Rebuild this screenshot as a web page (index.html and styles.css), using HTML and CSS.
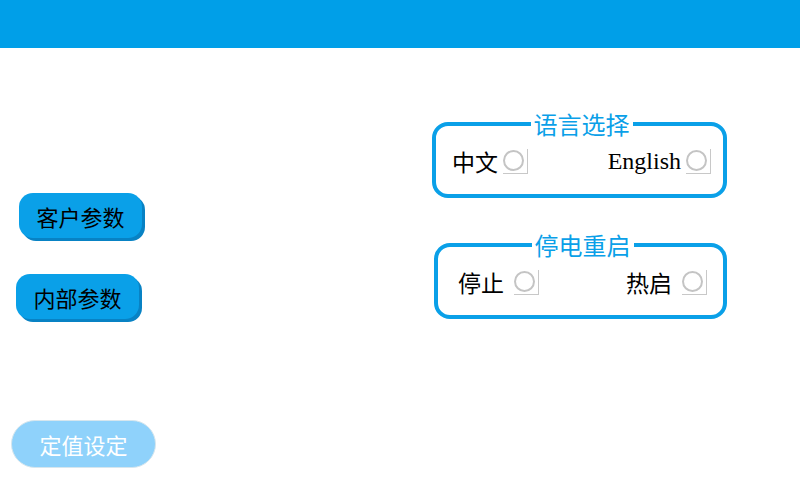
FILE: index.html
```html
<!DOCTYPE html>
<html lang="zh-CN">
<head>
    <meta charset="UTF-8">
    <meta name="viewport" content="width=device-width, initial-scale=1.0">
    <title>参数设置</title>
    <link rel="stylesheet" href="styles.css">
</head>
<body>

    <header class="topbar"></header>

    <main class="page">
        <div class="left-col">
            <button class="btn btn-blue btn-customer">客户参数</button>
            <button class="btn btn-blue btn-internal">内部参数</button>
            <button class="btn btn-light">定值设定</button>
        </div>

        <div class="right-col">
            <fieldset class="group group-lang">
                <legend>语言选择</legend>
                <label class="opt"><span class="cn">中文</span><span class="radio"></span></label>
                <label class="opt"><span class="en">English</span><span class="radio"></span></label>
            </fieldset>

            <fieldset class="group group-restart">
                <legend>停电重启</legend>
                <label class="opt"><span class="cn">停止</span><span class="radio"></span></label>
                <label class="opt"><span class="cn">热启</span><span class="radio"></span></label>
            </fieldset>
        </div>
    </main>

</body>
</html>
```

FILE: styles.css
```css
body { margin: 0; width: 800px; height: 480px; overflow: hidden; background: #fff; font-family: "Noto Sans CJK SC", "Noto Sans", sans-serif; }
.topbar { height: 48px; background-color: #009fe8; }
.page { display: flex; }

/* 左侧按钮 */
.left-col { width: 432px; display: flex; flex-direction: column; align-items: flex-start; padding-top: 145px; }
.btn { font-family: "Noto Sans CJK SC", sans-serif; font-size: 22px; border: none; padding: 0; cursor: pointer; }
.btn-blue { width: 123px; height: 45px; border-radius: 14px; background-color: #0aa0e8; color: #000; box-shadow: 3px 3px 0 #0882c4; }
.btn-customer { margin-left: 19px; }
.btn-internal { margin-left: 16px; margin-top: 36px; }
.btn-light { margin-left: 11px; margin-top: 101px; width: 145px; height: 48px; border-radius: 24px; background-color: #8fd2fb; color: #fff; border: 1px solid #d6e6ee; }

/* 右侧分组 */
.right-col { display: flex; flex-direction: column; padding-top: 64px; }
.group { margin: 0; border: 4px solid #0aa0e8; border-radius: 16px; display: flex; justify-content: space-between; align-items: center; }
.group legend { margin: 0 auto; padding: 0 3px; font-size: 24px; line-height: 24px; color: #0aa0e8; }
.group-lang { width: 295px; box-sizing: border-box; padding: 12px 12px 20px 16px; }
.group-restart { width: 293px; box-sizing: border-box; margin-left: 2px; margin-top: 35px; padding: 12px 16px 20px 20px; }

.opt { display: flex; align-items: center; }
.cn { font-size: 23px; line-height: 26px; color: #000; }
.en { font-family: "Liberation Serif", serif; font-size: 24px; line-height: 26px; color: #000; }
.radio { width: 25px; height: 25px; margin-left: 5px; box-sizing: border-box; border-right: 1px solid #c8c8c8; border-bottom: 1px solid #c8c8c8; position: relative; }
.radio::before { content: ""; position: absolute; left: 0; top: 1px; width: 21px; height: 21px; border-radius: 50%; border: 2px solid #c4c4c4; box-sizing: border-box; background: #fff; }
.group-restart .radio { margin-left: 10px; }
```
